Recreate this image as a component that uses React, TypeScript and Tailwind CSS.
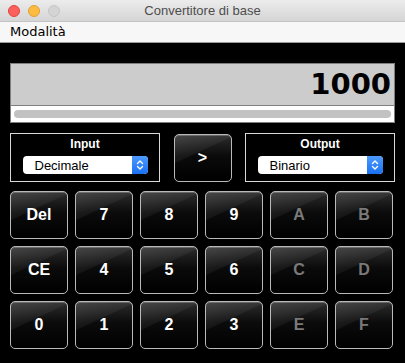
const keys: { label: string; enabled: boolean }[][] = [
  [
    { label: "Del", enabled: true },
    { label: "7", enabled: true },
    { label: "8", enabled: true },
    { label: "9", enabled: true },
    { label: "A", enabled: false },
    { label: "B", enabled: false },
  ],
  [
    { label: "CE", enabled: true },
    { label: "4", enabled: true },
    { label: "5", enabled: true },
    { label: "6", enabled: true },
    { label: "C", enabled: false },
    { label: "D", enabled: false },
  ],
  [
    { label: "0", enabled: true },
    { label: "1", enabled: true },
    { label: "2", enabled: true },
    { label: "3", enabled: true },
    { label: "E", enabled: false },
    { label: "F", enabled: false },
  ],
];

function GlossButton({ label, enabled = true, className = "" }: { label: string; enabled?: boolean; className?: string }) {
  return (
    <button
      className={`relative flex h-[48px] w-[58px] items-center justify-center overflow-hidden rounded-[5px] border border-[#b9b9b9] bg-[linear-gradient(180deg,#2c2c2c_0%,#0b0b0b_45%,#000_100%)] font-['Liberation_Sans',Arial,sans-serif] text-[16px] font-bold shadow-[inset_0_1px_0_#5a5a5a] ${
        enabled ? "text-white" : "text-[#7a7a7a]"
      } ${className}`}
    >
      <span className="pointer-events-none absolute inset-0 bg-[linear-gradient(155deg,rgba(255,255,255,0.13)_0%,rgba(255,255,255,0.05)_38%,rgba(255,255,255,0)_40%)]" />
      <span className="relative">{label}</span>
    </button>
  );
}

function Stepper() {
  return (
    <div className="flex h-full w-[16px] items-center justify-center rounded-r-[4px] bg-[linear-gradient(180deg,#4c9bff,#1a70f2)]">
      <svg width="8" height="12" viewBox="0 0 8 12" fill="none" stroke="white" strokeWidth="1.4" strokeLinecap="round" strokeLinejoin="round">
        <path d="M1.5 4.5 4 2l2.5 2.5" />
        <path d="M1.5 7.5 4 10l2.5-2.5" />
      </svg>
    </div>
  );
}

function BasePicker({ title, value }: { title: string; value: string }) {
  return (
    <div className="flex h-[49px] w-[150px] flex-col items-center border border-[#d8d8d8]">
      <div className="mt-[2px] font-['Liberation_Sans',Arial,sans-serif] text-[12px] font-bold leading-[16px] text-white">{title}</div>
      <div className="mt-[4px] flex h-[18px] w-[125px] items-center rounded-[4px] bg-white">
        <span className="flex-1 pl-[12px] font-['Liberation_Sans',Arial,sans-serif] text-[13px] leading-none text-black">{value}</span>
        <Stepper />
      </div>
    </div>
  );
}

export default function App() {
  return (
    <div className="flex h-[363px] w-[405px] flex-col bg-black">
      <div className="relative flex h-[22px] items-center justify-center border-b border-[#c4c4c4] bg-[linear-gradient(180deg,#ececec,#d5d5d5)]">
        <div className="absolute left-[8px] top-[5px] flex gap-[8px]">
          <span className="h-[12px] w-[12px] rounded-full border border-[#e0443e] bg-[#fc605c]" />
          <span className="h-[12px] w-[12px] rounded-full border border-[#dea236] bg-[#fdbc40]" />
          <span className="h-[12px] w-[12px] rounded-full border border-[#c5c5c5] bg-[#d4d4d4]" />
        </div>
        <span className="font-['Liberation_Sans',Arial,sans-serif] text-[13px] text-[#4d4d4d]">Convertitore di base</span>
      </div>
      <div className="flex h-[21px] items-center border-b border-[#9a9a9a] bg-[#f7f7f7] pl-[10px]">
        <span className="font-['DejaVu_Sans',sans-serif] text-[13px] text-black">Modalità</span>
      </div>

      <div className="mx-[10px] mt-[20px] flex w-[385px] flex-col border border-[#7f7f7f] bg-white">
        <div className="flex h-[42px] items-center justify-end border-b border-[#7f7f7f] bg-[#cccccc] pr-[3px]">
          <span className="font-['DejaVu_Sans',sans-serif] text-[29px] font-bold leading-none text-black">1000</span>
        </div>
        <div className="flex h-[16px] items-center px-[3px]">
          <div className="h-[8px] w-full rounded-full bg-[#c2c2c2]" />
        </div>
      </div>

      <div className="mx-[10px] mt-[10px] flex items-center justify-between">
        <BasePicker title="Input" value="Decimale" />
        <GlossButton label=">" />
        <BasePicker title="Output" value="Binario" />
      </div>

      <div className="ml-[10px] mt-[9px] flex flex-col gap-[7px]">
        {keys.map((row, i) => (
          <div key={i} className="flex gap-[7px]">
            {row.map((k) => (
              <GlossButton key={k.label} label={k.label} enabled={k.enabled} />
            ))}
          </div>
        ))}
      </div>
    </div>
  );
}
